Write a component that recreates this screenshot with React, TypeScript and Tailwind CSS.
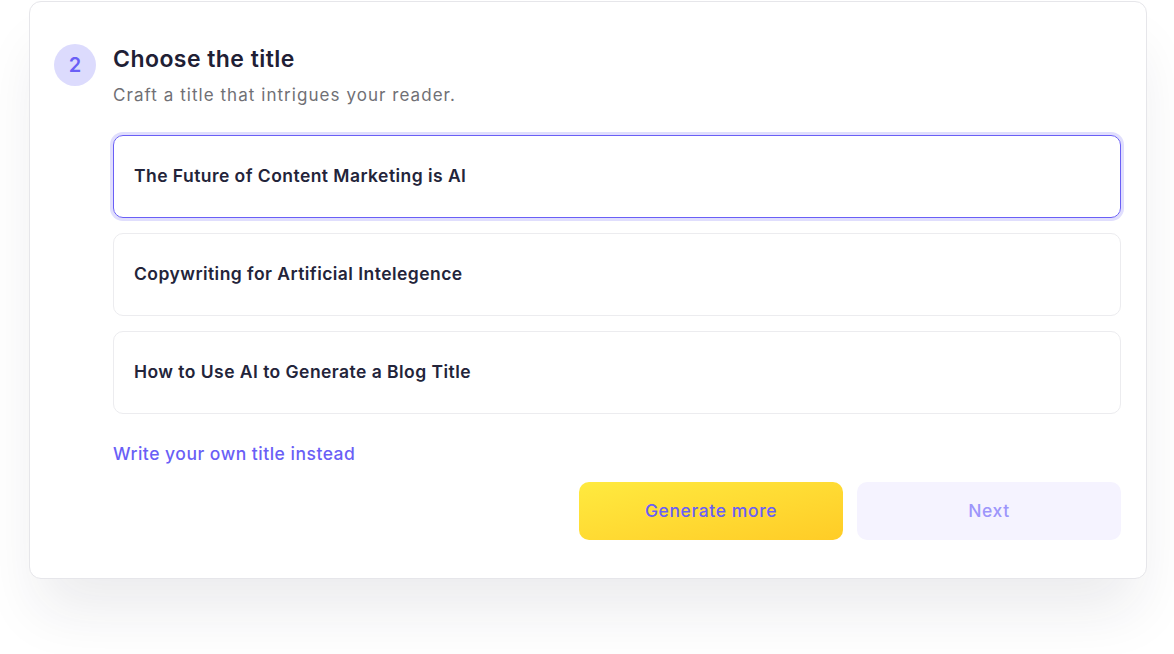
import React from "react";

const options = [
  "The Future of Content Marketing is AI",
  "Copywriting for Artificial Intelegence",
  "How to Use AI to Generate a Blog Title",
];

export default function App() {
  return (
    <div
      className="w-[1174px] h-[654px] bg-white overflow-hidden"
      style={{ fontFamily: "Inter, 'Noto Sans', sans-serif" }}
    >
      <div className="ml-[29px] mt-[1px] w-[1118px] h-[578px] rounded-[12px] border border-[#e6e6ea] bg-white shadow-[0_40px_60px_-10px_rgba(30,30,60,0.09)] pl-[24px] pr-[25px] pt-[42px]">
        <div className="flex gap-[17px]">
          <div className="w-[42px] h-[42px] shrink-0 rounded-full bg-[#dcdbfd] flex items-center justify-center text-[#6a5ff6] text-[20px] font-semibold">
            2
          </div>
          <div className="flex-1">
            <h2 className="text-[23px] leading-[30px] font-semibold text-[#1f2035] tracking-[0.45px]">
              Choose the title
            </h2>
            <p className="mt-[10px] text-[17px] leading-[22px] text-[#707075] tracking-[1.05px]">
              Craft a title that intrigues your reader.
            </p>
            <div className="mt-[29px] flex flex-col gap-[15px]">
              {options.map((o, i) => (
                <div
                  key={o}
                  className={
                    i === 0
                      ? "h-[83px] rounded-[10px] border-[1.5px] border-[#6a5ff6] ring-[3px] ring-[#e0defd] flex items-center pl-[20px] text-[17.5px] font-semibold text-[#23243a] tracking-[0.45px]"
                      : "h-[83px] rounded-[10px] border border-[#ececef] flex items-center pl-[20px] text-[17.5px] font-semibold text-[#23243a] tracking-[0.45px]"
                  }
                >
                  {o}
                </div>
              ))}
            </div>
            <div className="mt-[28px] text-[17.5px] leading-[24px] font-medium text-[#6a5ff6] tracking-[0.5px]">
              Write your own title instead
            </div>
            <div className="mt-[16px] flex justify-end gap-[14px]">
              <button className="w-[264px] h-[58px] rounded-[10px] bg-gradient-to-br from-[#ffea3f] to-[#ffcc26] text-[#6a5ff6] text-[17.5px] font-medium tracking-[0.6px]">
                Generate more
              </button>
              <button className="w-[264px] h-[58px] rounded-[10px] bg-[#f5f3ff] text-[#9d96fb] text-[17.5px] font-medium tracking-[0.6px]">
                Next
              </button>
            </div>
          </div>
        </div>
      </div>
    </div>
  );
}
